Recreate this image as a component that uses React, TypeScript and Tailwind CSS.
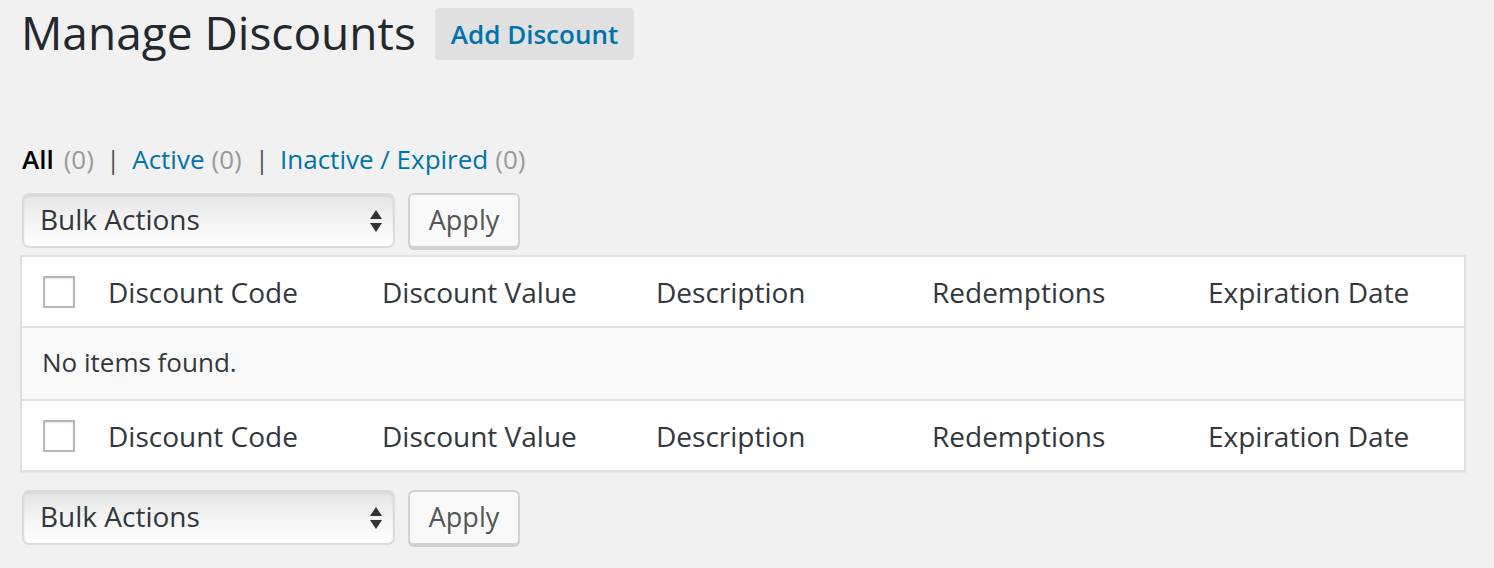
import React from 'react'

const columns = [
  { label: 'Discount Code', width: 'w-[274px]' },
  { label: 'Discount Value', width: 'w-[274px]' },
  { label: 'Description', width: 'w-[276px]' },
  { label: 'Redemptions', width: 'w-[276px]' },
  { label: 'Expiration Date', width: 'flex-1' },
]

function Checkbox() {
  return <div className="w-8 h-8 bg-white border-2 border-[#b4b9be] shadow-[inset_0_1px_2px_rgba(0,0,0,0.1)]" />
}

function HeaderRow({ bottom }: { bottom?: boolean }) {
  return (
    <div className={`flex items-center h-[71px] bg-white ${bottom ? 'border-t-2 border-[#e1e1e1]' : 'border-b-2 border-[#e1e1e1]'}`}>
      <div className="w-[66px] pl-[21px] flex items-center">
        <Checkbox />
      </div>
      {columns.map((c) => (
        <div key={c.label} className={`${c.width} px-5 text-[28px] text-[#32373c] leading-none`}>
          {c.label}
        </div>
      ))}
    </div>
  )
}

function BulkBar() {
  return (
    <div className="flex items-center gap-[13px]">
      <div className="w-[373px] h-[55px] rounded-[7px] border-2 border-[#dcdcdc] bg-gradient-to-b from-[#e4e4e4] via-[#f4f4f4] to-white shadow-[inset_0_1px_3px_rgba(0,0,0,0.08)] flex items-center justify-between pl-[16px] pr-[10px] pb-[3px]">
        <span className="text-[28px] text-[#32373c] leading-none">Bulk Actions</span>
        <svg width="14" height="26" viewBox="0 0 14 26" className="mt-[3px]">
          <path d="M7 2 L13 11 L1 11 Z" fill="#333" />
          <path d="M1 15 L13 15 L7 24 Z" fill="#333" />
        </svg>
      </div>
      <div className="w-[112px] h-[55px] rounded-[6px] border-2 border-[#d2d2d2] bg-[#f9f9f9] shadow-[0_2px_0_#cfcfcf] flex items-center justify-center pb-[3px]">
        <span className="text-[27px] text-[#555] leading-none">Apply</span>
      </div>
    </div>
  )
}

export default function App() {
  return (
    <div className="w-[1494px] h-[568px] bg-[#f1f1f1] font-['Open_Sans',sans-serif] overflow-hidden pl-[22px] pr-[28px]">
      <div className="flex items-center gap-[19px] pt-2 h-[60px]">
        <h1 className="text-[46px] text-[#23282d] leading-none -mt-[5px] -ml-[1px]">Manage Discounts</h1>
        <div className="h-[52px] px-4 rounded-[4px] bg-[#e0e0e0] flex items-center">
          <span className="text-[26px] font-semibold text-[#0073aa] leading-none">Add Discount</span>
        </div>
      </div>

      <div className="flex items-center mt-[83px] h-[32px] text-[26px] leading-none">
        <span className="font-semibold text-black">All</span>
        <span className="text-[#999] ml-[10px]">(0)</span>
        <span className="text-[#555] ml-[12px] mr-[12px]">|</span>
        <span className="text-[#0073aa]">Active</span>
        <span className="text-[#999] ml-[7px]">(0)</span>
        <span className="text-[#555] ml-[13px] mr-[11px]">|</span>
        <span className="text-[#0073aa]">Inactive / Expired</span>
        <span className="text-[#999] ml-[7px]">(0)</span>
      </div>

      <div className="mt-[18px]">
        <BulkBar />
      </div>

      <div className="mt-[7px] -ml-[2px] border-2 border-[#e1e1e1] shadow-[0_1px_1px_rgba(0,0,0,0.04)]">
        <HeaderRow />
        <div className="h-[71px] bg-[#f9f9f9] flex items-center pl-[20px] pb-[4px] text-[26px] text-[#32373c] leading-none">
          No items found.
        </div>
        <HeaderRow bottom />
      </div>

      <div className="mt-[18px]">
        <BulkBar />
      </div>
    </div>
  )
}
